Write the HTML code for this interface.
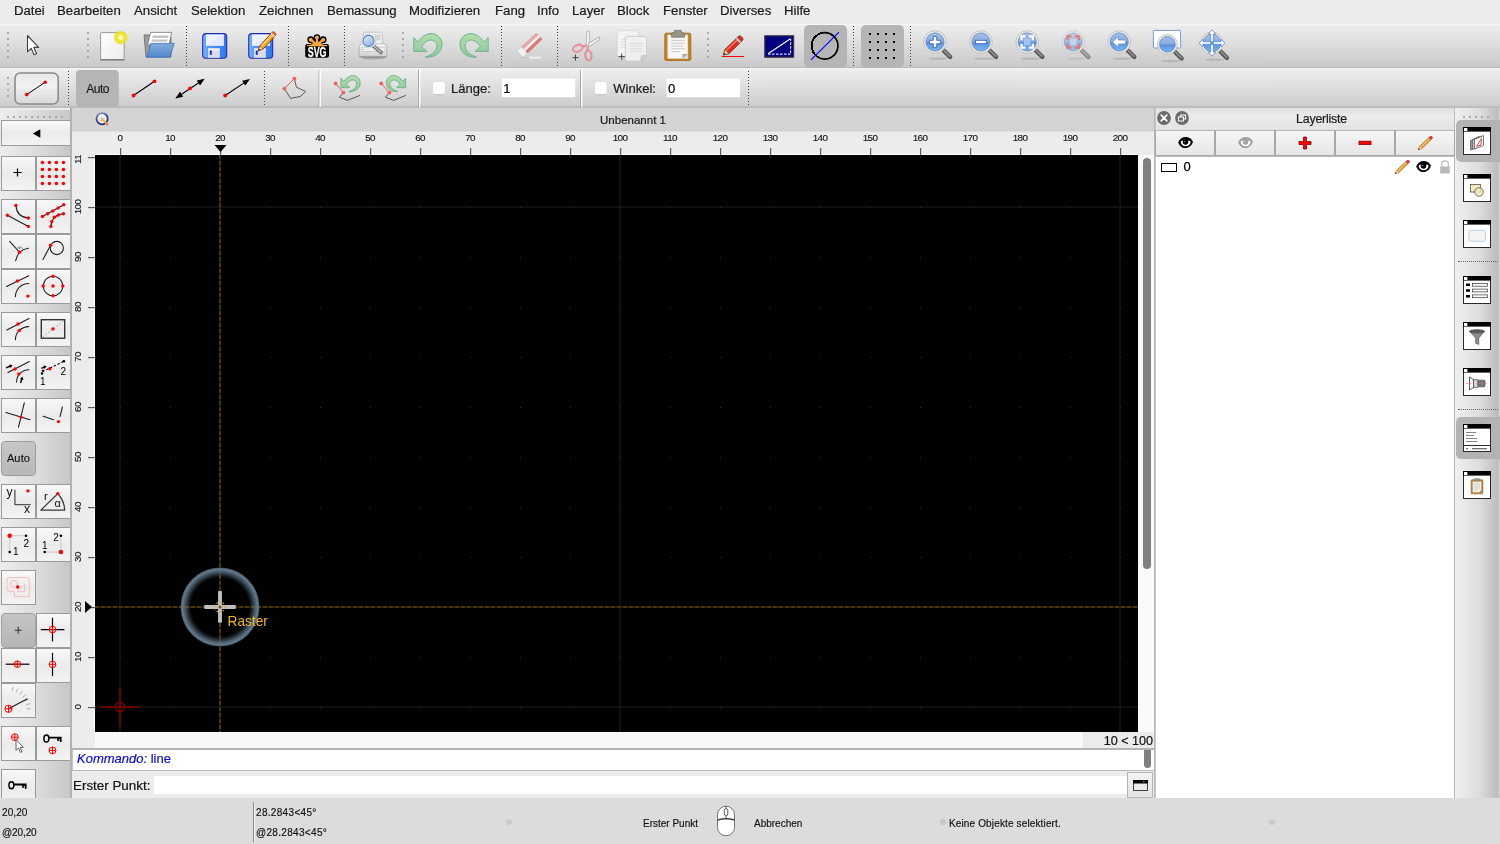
<!DOCTYPE html>
<html><head><meta charset="utf-8">
<style>
*{box-sizing:border-box;margin:0;padding:0}
html,body{width:1500px;height:844px;overflow:hidden;background:#ececec;font-family:"Liberation Sans",sans-serif;color:#1a1a1a}
.abs{position:absolute}
#menubar{position:absolute;left:0;top:0;width:1500px;height:25px;background:#ececec;border-bottom:1px solid #f6f6f6}
#menubar span{-webkit-text-stroke:.22px #1c1c1c;position:absolute;top:3px;font-size:13.2px;line-height:16px;white-space:nowrap;color:#1c1c1c}
#tb1{position:absolute;left:0;top:25px;width:1500px;height:43px;background:linear-gradient(#eeeeee,#dadada 55%,#c9c9c9);border-bottom:1px solid #b9b9b9}
#tb2{position:absolute;left:0;top:68px;width:1500px;height:40px;background:linear-gradient(#efefef,#dcdcdc 55%,#cdcdcd);border-top:1px solid #f4f4f4;border-bottom:2px solid #bdbdbd}
.vsep{position:absolute;width:0;border-left:1px dotted #555}
.hdl{position:absolute;width:2px;background-image:linear-gradient(#a8a8a8 2px,transparent 2px);background-size:2px 6px}
#left{position:absolute;left:0;top:110px;width:72px;height:688px;background:linear-gradient(90deg,#ededed,#dadada 55%,#c6c6c6)}
.tbtn{position:absolute;width:35px;height:35px;background:linear-gradient(#f8f8f8,#ebebeb 50%,#f3f3f3);border:1px solid #9a9a9a}
#status{position:absolute;left:0;top:798px;width:1500px;height:46px;background:#dcdcdc}
#status span{-webkit-text-stroke:.15px #111;position:absolute;font-size:10px;line-height:12px;white-space:nowrap;color:#111;letter-spacing:0;margin-top:1px}
#status i{position:absolute;width:6px;height:6px;border-radius:3px;background:#cacaca}
#tabbar{position:absolute;left:72px;top:108px;width:1083px;height:23px;background:#d3d3d3}
#hruler{position:absolute;left:73px;top:131px;width:1082px;height:24px;background:#ececec}
#vruler{position:absolute;left:73px;top:155px;width:22px;height:590px;background:#ececec}
#canvas{position:absolute;left:95px;top:155px;width:1043px;height:577px;background:#000;overflow:hidden}
#rpanel{position:absolute;left:1155px;top:108px;width:299px;height:690px;background:#fff}
#rtool{position:absolute;left:1454px;top:108px;width:46px;border-left:1px solid #bdbdbd;height:690px;background:linear-gradient(90deg,#efefef,#dddddd 55%,#bcbcbc 95%,#d4d4d4)}

#hstrip{position:absolute;left:95px;top:732px;width:1059px;height:16px;background:#f8f8f8}
#zoomlbl{position:absolute;left:1083px;top:732px;width:71px;height:16px;background:#ebebeb;font-size:12.6px;line-height:17.5px;text-align:right;padding-right:1px;padding-top:.7px;-webkit-text-stroke:.2px #111;color:#111;white-space:nowrap}
#vscroll{position:absolute;left:1138px;top:155px;width:16px;height:577px;background:#fafafa}
#vthumb{position:absolute;left:1143px;top:158px;width:8px;height:411px;border-radius:4px;background:#808080}
#cmd{position:absolute;left:72px;top:748px;width:1082px;height:23px;background:#fff;border-top:2px solid #b4b4b4;border-bottom:1px solid #b8b8b8;border-left:1px solid #c4c4c4}
#cmd span{position:absolute;left:4px;top:1px;font-size:13px;line-height:16px;color:#0c0cdc;-webkit-text-stroke:.2px #0c0cdc;white-space:nowrap}
#cthumb{position:absolute;left:1144px;top:750px;width:7px;height:18px;border-radius:0 0 3.5px 3.5px !important;border-radius:3.5px;background:#808080}
#prompt{position:absolute;left:72px;top:771px;width:1082px;height:27px;background:#ececec}
#prompt .lbl{-webkit-text-stroke:.2px #111;position:absolute;left:1px;top:5.7px;font-size:13.4px;line-height:18px;color:#111;white-space:nowrap}
#prompt .inp{position:absolute;left:82px;top:5px;width:973px;height:18px;background:#fff}
#prompt .btn{position:absolute;left:1055px;top:1px;width:26px;height:26px;background:linear-gradient(#f2f2f2,#e4e4e4);border:1px solid #b4b4b4}
#cborder{position:absolute;left:1154px;top:108px;width:2px;height:690px;background:linear-gradient(90deg,#b0b0b0,#cfcfcf)}
#lborder{position:absolute;left:70px;top:108px;width:2px;height:690px;background:#b2b2b2}
#rtitle{position:absolute;left:1156px;top:108px;width:298px;height:22px;background:linear-gradient(#dedede,#ececec 40%,#e2e2e2);font-size:12.4px;letter-spacing:-.22px;line-height:23px;text-align:center;color:#1c1c1c;padding-left:33px;-webkit-text-stroke:.2px #1c1c1c}
.lbtn{position:absolute;top:130px;width:60px;height:26px;background:linear-gradient(#f6f6f6,#e6e6e6);border:1px solid #a8a8a8;border-top-color:#b8b8b8}
</style></head><body><div id="root" style="position:absolute;left:0;top:0;width:1500px;height:844px;will-change:transform;opacity:.999">
<div id="menubar">
<span style="left:14px">Datei</span><span style="left:57px">Bearbeiten</span><span style="left:134px">Ansicht</span><span style="left:191px">Selektion</span><span style="left:259px">Zeichnen</span><span style="left:327px">Bemassung</span><span style="left:409px">Modifizieren</span><span style="left:495px">Fang</span><span style="left:537px">Info</span><span style="left:572px">Layer</span><span style="left:617px">Block</span><span style="left:663px">Fenster</span><span style="left:720px">Diverses</span><span style="left:784px">Hilfe</span>
</div>
<div id="tb1"></div>
<div id="tb2"></div>
<!--TB-->
<svg class="abs" style="left:0;top:24px" width="1500" height="44" viewBox="0 24 1500 44"><defs><linearGradient id="gBlue" x1="0" y1="0" x2="0" y2="1"><stop offset="0" stop-color="#a6c0e8"/><stop offset="0.49" stop-color="#85a9e0"/><stop offset="0.52" stop-color="#5c92dc"/><stop offset="1" stop-color="#7cb6f4"/></linearGradient><linearGradient id="gFl" x1="0" y1="0" x2="1" y2="0"><stop offset="0" stop-color="#7ab4ff"/><stop offset="0.3" stop-color="#4f97fb"/><stop offset="1" stop-color="#2a78f4"/></linearGradient><radialGradient id="gY"><stop offset="0" stop-color="#ffffff"/><stop offset="0.16" stop-color="#fdfbc0"/><stop offset="0.4" stop-color="#f1ea3a"/><stop offset="0.72" stop-color="#e8e020" stop-opacity="0.95"/><stop offset="1" stop-color="#e8e020" stop-opacity="0"/></radialGradient><linearGradient id="gPage" x1="0" y1="0" x2="1" y2="1"><stop offset="0" stop-color="#ffffff"/><stop offset="1" stop-color="#ececec"/></linearGradient><linearGradient id="gFold" x1="0" y1="0" x2="0" y2="1"><stop offset="0" stop-color="#84acdc"/><stop offset="1" stop-color="#4f87cc"/></linearGradient><linearGradient id="gGreen" x1="0" y1="0" x2="0" y2="1"><stop offset="0" stop-color="#b4dca8"/><stop offset="1" stop-color="#8cc8a0"/></linearGradient><linearGradient id="gPr" x1="0" y1="0" x2="0" y2="1"><stop offset="0" stop-color="#fbfbfb"/><stop offset="0.55" stop-color="#e6e6e6"/><stop offset="1" stop-color="#c6c6c6"/></linearGradient><linearGradient id="gBtn" x1="0" y1="0" x2="0" y2="1"><stop offset="0" stop-color="#e8e8e8"/><stop offset="0.48" stop-color="#f3f3f3"/><stop offset="0.52" stop-color="#ebebeb"/><stop offset="1" stop-color="#d9d9d9"/></linearGradient><linearGradient id="gLens" x1="0" y1="0" x2="0.5" y2="1"><stop offset="0" stop-color="#e4ecf8"/><stop offset="0.5" stop-color="#c0d2ea"/><stop offset="1" stop-color="#9db8dc"/></linearGradient></defs><rect x="7" y="32" width="2" height="2" fill="#a9a9a9"/><rect x="7" y="38" width="2" height="2" fill="#a9a9a9"/><rect x="7" y="44" width="2" height="2" fill="#a9a9a9"/><rect x="7" y="50" width="2" height="2" fill="#a9a9a9"/><rect x="7" y="56" width="2" height="2" fill="#a9a9a9"/><rect x="87" y="32" width="2" height="2" fill="#a9a9a9"/><rect x="87" y="38" width="2" height="2" fill="#a9a9a9"/><rect x="87" y="44" width="2" height="2" fill="#a9a9a9"/><rect x="87" y="50" width="2" height="2" fill="#a9a9a9"/><rect x="87" y="56" width="2" height="2" fill="#a9a9a9"/><rect x="402" y="32" width="2" height="2" fill="#a9a9a9"/><rect x="402" y="38" width="2" height="2" fill="#a9a9a9"/><rect x="402" y="44" width="2" height="2" fill="#a9a9a9"/><rect x="402" y="50" width="2" height="2" fill="#a9a9a9"/><rect x="402" y="56" width="2" height="2" fill="#a9a9a9"/><rect x="707" y="32" width="2" height="2" fill="#a9a9a9"/><rect x="707" y="38" width="2" height="2" fill="#a9a9a9"/><rect x="707" y="44" width="2" height="2" fill="#a9a9a9"/><rect x="707" y="50" width="2" height="2" fill="#a9a9a9"/><rect x="707" y="56" width="2" height="2" fill="#a9a9a9"/>
<line x1="186.5" y1="26" x2="186.5" y2="66" stroke="#444" stroke-width="1" stroke-dasharray="1 2"/>
<line x1="288.5" y1="26" x2="288.5" y2="66" stroke="#444" stroke-width="1" stroke-dasharray="1 2"/>
<line x1="344.5" y1="26" x2="344.5" y2="66" stroke="#444" stroke-width="1" stroke-dasharray="1 2"/>
<line x1="501.5" y1="26" x2="501.5" y2="66" stroke="#444" stroke-width="1" stroke-dasharray="1 2"/>
<line x1="557.5" y1="26" x2="557.5" y2="66" stroke="#444" stroke-width="1" stroke-dasharray="1 2"/>
<line x1="853.5" y1="26" x2="853.5" y2="66" stroke="#444" stroke-width="1" stroke-dasharray="1 2"/>
<line x1="910.5" y1="26" x2="910.5" y2="66" stroke="#444" stroke-width="1" stroke-dasharray="1 2"/>
<path d="M27.5 35.5 V51.8 L31.2 48.4 L34 54.8 L36.6 53.6 L33.8 47.4 H38.6Z" fill="#fff" stroke="#444" stroke-width="1.1" stroke-linejoin="round"/>
<rect x="100.6" y="32.6" width="23.6" height="27" rx="1.2" fill="url(#gPage)" stroke="#9a9a9a" stroke-width="1"/><path d="M100.2 59.8 H124.6" stroke="#787878" stroke-width="1.4"/><circle cx="120.7" cy="37.6" r="7.6" fill="url(#gY)"/><path d="M102.4 42.2 h1 M102.4 49.4 h1" stroke="#ccc" stroke-width="0.8"/>
<path d="M144 35 H152 L153 37 H171 V57 H146Z" fill="#9c9c9c" stroke="#6a6a6a" stroke-width="0.8"/><path d="M150.6 32.4 H171.6 L169 45 H147.6Z" fill="#fff" stroke="#777" stroke-width="0.8"/><path d="M152.8 35.6 H168.6 L168 38 H152.4Z M152 39.4 H167.6 L167 41.8 H151.4Z" fill="#c4c4c4"/><path d="M150.6 43.4 H174.2 L169.8 57.2 H146.2 Q149.6 51 150.6 43.4Z" fill="url(#gFold)" stroke="#3f74bb" stroke-width="0.8" stroke-linejoin="round"/>
<rect x="202.7" y="33.6" width="24" height="24.6" rx="3.2" fill="url(#gFl)" stroke="#2a2aa6" stroke-width="1.1"/><rect x="206" y="34.4" width="17.8" height="11.4" fill="#eef1ff"/><path d="M206 45.8 L223.8 34.4 V45.8Z" fill="#dfe6ff" opacity="0.7"/><rect x="208" y="48.4" width="11.8" height="9.4" fill="#dcdce6"/><rect x="208" y="48.4" width="11.8" height="2" fill="#f0f0f6"/><rect x="209.8" y="50.6" width="2" height="4.2" fill="#1430d0"/>
<rect x="248.7" y="33.6" width="24" height="24.6" rx="3.2" fill="url(#gFl)" stroke="#2a2aa6" stroke-width="1.1"/><rect x="252" y="34.4" width="17.8" height="11.4" fill="#eef1ff"/><path d="M252 45.8 L269.8 34.4 V45.8Z" fill="#dfe6ff" opacity="0.7"/><rect x="254" y="48.4" width="11.8" height="9.4" fill="#dcdce6"/><rect x="254" y="48.4" width="11.8" height="2" fill="#f0f0f6"/><rect x="255.8" y="50.6" width="2" height="4.2" fill="#1430d0"/><g transform="translate(258.4,50.8) rotate(-47.6)"><path d="M0 0 L4.6 -2.3 H23 Q24.4 -2.3 24.4 -1 V1 Q24.4 2.3 23 2.3 H4.6Z" fill="#f8a818" stroke="#a03010" stroke-width="0.9" stroke-linejoin="round"/><path d="M4.6 -0.9 H21" stroke="#ffe27a" stroke-width="1.3"/><path d="M0 0 L4.6 -2.3 V2.3Z" fill="#f4dcb4" stroke="#a03010" stroke-width="0.6"/><path d="M0 0 L1.8 -0.9 V0.9Z" fill="#222"/><rect x="20.6" y="-2.3" width="1.8" height="4.6" fill="#d8d8d8"/><path d="M22.4 -2.3 H23 Q24.4 -2.3 24.4 -1 V1 Q24.4 2.3 23 2.3 H22.4Z" fill="#e06030"/></g>
<path d="M307.4 44 H326.8 Q329 44 329 46.2 V55.4 Q329 57.8 326.6 57.8 H307.6 Q305.2 57.8 305.2 55.4 V46.2 Q305.2 44 307.4 44Z" fill="#000"/><path d="M316.95 44.8 L310.7 39.7" stroke="#000" stroke-width="5" stroke-linecap="round"/><circle cx="310.7" cy="39.7" r="3.35" fill="#000"/><path d="M316.95 44.8 L316.95 37.5" stroke="#000" stroke-width="5" stroke-linecap="round"/><circle cx="316.95" cy="37.5" r="3.35" fill="#000"/><path d="M316.95 44.8 L323.2 39.7" stroke="#000" stroke-width="5" stroke-linecap="round"/><circle cx="323.2" cy="39.7" r="3.35" fill="#000"/><path d="M306.9 45.9 Q311.6 45 314.2 42.6 H319.7 Q322.3 45 327.3 45.9 Q317 46.6 306.9 45.9Z" fill="#f9a936"/><path d="M316.95 44.8 L310.7 39.7" stroke="#f9a936" stroke-width="2.3" stroke-linecap="round"/><circle cx="310.7" cy="39.7" r="1.95" fill="#f9a936"/><path d="M316.95 44.8 L316.95 37.5" stroke="#f9a936" stroke-width="2.3" stroke-linecap="round"/><circle cx="316.95" cy="37.5" r="1.95" fill="#f9a936"/><path d="M316.95 44.8 L323.2 39.7" stroke="#f9a936" stroke-width="2.3" stroke-linecap="round"/><circle cx="323.2" cy="39.7" r="1.95" fill="#f9a936"/><rect x="307" y="45" width="20.2" height="1.1" fill="#f9a936"/><text x="317.1" y="57.1" text-anchor="middle" font-family="Liberation Sans, sans-serif" font-size="14.4" font-weight="bold" fill="#fff" stroke="#fff" stroke-width="0.3" textLength="18.8" lengthAdjust="spacingAndGlyphs">SVG</text>
<rect x="363.4" y="32.2" width="19" height="14" rx="1" fill="#f2f2f2" stroke="#bdbdbd" stroke-width="0.8"/><rect x="374.6" y="34.4" width="6" height="6" fill="#d6d6d6"/><path d="M362.2 43.8 H383.8 Q385.4 43.8 386 45 L386.8 47.4 V55.4 Q386.8 57.4 384.8 57.4 H361.2 Q359.2 57.4 359.2 55.4 V47.4 L360 45 Q360.6 43.8 362.2 43.8Z" fill="url(#gPr)" stroke="#a8a8a8" stroke-width="0.8"/><path d="M359.6 56.9 H386.4" stroke="#8e8e8e" stroke-width="1.1"/><path d="M361.2 47.2 H384.8 V51.6 H361.2Z" fill="#f0f0f0" stroke="#b4b4b4" stroke-width="0.6"/><circle cx="363.4" cy="49.4" r="0.5" fill="#777"/><ellipse cx="373" cy="58.4" rx="11" ry="1.1" fill="#000" opacity="0.16"/><path d="M373.4 45.8 L381 52.4" stroke="#5e5e5e" stroke-width="3.6" stroke-linecap="round"/><path d="M373.6 45.8 L380.9 52.2" stroke="#b4b4b0" stroke-width="2" stroke-linecap="round"/><circle cx="368.5" cy="40.9" r="7.2" fill="#f5f5f1" stroke="#bcbcb4" stroke-width="0.5"/><circle cx="368.5" cy="40.9" r="5.5" fill="url(#gLens)" stroke="#4a84cc" stroke-width="1.1"/>
<path transform="translate(430.6,45.4) scale(1.0,1.0)" d="M-16.8 -7.9 L-12.9 -3.3 C-9 -8 -5 -11.6 0.4 -11.8 C6.5 -11.9 11.2 -7.5 11.4 -1.3 C11.6 4.5 8 8.5 3.6 10.4 C1 11.5 -2 12 -4.7 12 Q-5.4 11.7 -4.7 11.3 C0 10.4 4.6 7 6 2.7 C7.2 -1.5 4.5 -5.3 0 -5.3 C-3.5 -5.2 -6.5 -2.2 -9.1 1.1 L-3.7 6 H-16.8Z" fill="url(#gGreen)" stroke="#6eb48c" stroke-width="1.00" stroke-linejoin="round" opacity="1"/>
<path transform="translate(471.4,45.4) scale(-1.0,1.0)" d="M-16.8 -7.9 L-12.9 -3.3 C-9 -8 -5 -11.6 0.4 -11.8 C6.5 -11.9 11.2 -7.5 11.4 -1.3 C11.6 4.5 8 8.5 3.6 10.4 C1 11.5 -2 12 -4.7 12 Q-5.4 11.7 -4.7 11.3 C0 10.4 4.6 7 6 2.7 C7.2 -1.5 4.5 -5.3 0 -5.3 C-3.5 -5.2 -6.5 -2.2 -9.1 1.1 L-3.7 6 H-16.8Z" fill="url(#gGreen)" stroke="#6eb48c" stroke-width="1.00" stroke-linejoin="round" opacity="1"/>
<g opacity="0.88"><ellipse cx="531" cy="57.6" rx="11" ry="1.1" fill="#fff" opacity="0.75"/><ellipse cx="525" cy="57.7" rx="4.6" ry="0.9" fill="#888" opacity="0.5"/><g transform="translate(517,51.2) rotate(-43.5)"><rect x="0" y="0" width="6.4" height="8.8" fill="#f6f6f6" stroke="#b8b8b8" stroke-width="0.5"/><rect x="6.4" y="0" width="20.4" height="8.8" rx="1" fill="#e07878"/><rect x="6.4" y="0" width="20.4" height="3" rx="0.8" fill="#eba2a2"/><rect x="6.4" y="3" width="20.4" height="2.8" fill="#f6f6f6"/><rect x="6.4" y="5.8" width="20.4" height="3" rx="0.6" fill="#d96c6c"/></g></g>
<g><path d="M586 46 L587 31.4 L589.6 31 L589.2 46Z" fill="#f4f4f4" stroke="#aaa" stroke-width="0.7"/><path d="M588.4 43.4 L599.4 37 L599.8 39.6 L589.2 46.4Z" fill="#f4f4f4" stroke="#999" stroke-width="0.7"/><ellipse cx="577.8" cy="48.2" rx="5" ry="3.2" transform="rotate(-22 577.8 48.2)" fill="none" stroke="#e8929a" stroke-width="2.2"/><ellipse cx="588.4" cy="55.4" rx="3.1" ry="4.9" transform="rotate(-8 588.4 55.4)" fill="none" stroke="#e8929a" stroke-width="2.2"/><path d="M582.6 46.6 L587.4 45.4 M587.6 47 L587.6 50.6" stroke="#e8929a" stroke-width="2.4"/><path d="M572.4 57.6 H578.6 M575.5 54.5 V60.7" stroke="#444" stroke-width="1"/></g>
<g><rect x="617.4" y="30.6" width="21.2" height="25.6" rx="1.4" fill="#f4f4f4" stroke="#d4d4d4" stroke-width="0.8"/><path d="M621 39.4 H628 M621 42 H628 M621 44.6 H628 M621 47.2 H628" stroke="#dcdcdc" stroke-width="0.9"/><path d="M626.8 36.4 H645.4 Q646.6 36.4 646.6 37.6 V55.6 L641 61.2 H626.8 Q625.4 61.2 625.4 60 V37.6 Q625.4 36.4 626.8 36.4Z" fill="#f0f0f0" stroke="#c4c4c4" stroke-width="0.8"/><path d="M641 61.2 V57 Q641 55.6 642.4 55.6 H646.6Z" fill="#d0d0d0" stroke="#b8b8b8" stroke-width="0.6"/><path d="M629.6 43.4 H643.4 M629.6 46 H643.4 M629.6 48.6 H641.4 M629.6 51.2 H643.4" stroke="#d8d8d8" stroke-width="0.9"/><path d="M618.6 56.6 H624.8 M621.7 53.5 V59.7" stroke="#444" stroke-width="1"/></g>
<g><rect x="664.8" y="33.2" width="26" height="27.2" rx="1.4" fill="#c8841c" stroke="#a0640c" stroke-width="0.8"/><rect x="667.8" y="35" width="20" height="23.4" fill="#f7f7f7" stroke="#ddd" stroke-width="0.5"/><path d="M671.4 40.4 H685 M671.4 43.2 H684.4 M671.4 46 H683 M671.4 48.8 H685 M671.4 51.6 H680" stroke="#c4c4c4" stroke-width="0.9"/><path d="M682.4 58.4 V54 H687.8 V58.4Z" fill="#aaa"/><path d="M682.4 58.4 L687.8 54 V58.4Z" fill="#ddd"/><path d="M671.4 37.2 V34 Q671.4 32.6 673 32.6 H674.4 V30.4 H681.4 V32.6 H683 Q684.6 32.6 684.6 34 V37.2Z" fill="#969688" stroke="#707064" stroke-width="0.7"/></g>
<g><path d="M722 56.5 H744" stroke="#ff0000" stroke-width="1"/><g transform="translate(723.4,55) rotate(-44.2)"><path d="M0 0 L5 -2.9 H23.6 Q25.6 -2.9 25.6 -1 V1 Q25.6 2.9 23.6 2.9 H5Z" fill="#e02820" stroke="#7a4a1a" stroke-width="0.9" stroke-linejoin="round"/><path d="M5 -1.2 H20" stroke="#ff7a6a" stroke-width="1.3"/><path d="M0 0 L5 -2.9 V2.9Z" fill="#f0cfa0" stroke="#7a4a1a" stroke-width="0.6"/><path d="M0 0 L2 -1.15 V1.15Z" fill="#222"/><rect x="19.8" y="-2.9" width="2.2" height="5.8" fill="#c4c4c4"/></g></g>
<rect x="764.8" y="35.8" width="28.8" height="21.4" fill="#000080" stroke="#3a3a3a" stroke-width="1.2"/><path d="M768 53.8 L790.4 38.8" stroke="#fff" stroke-width="1.1"/><path d="M768 54.2 H790.6 V38.8" stroke="#dcdcf4" stroke-width="1.2" fill="none" stroke-dasharray="2.6 1.4"/>
<rect x="804" y="25" width="43" height="42.6" rx="5" fill="#b5b5b5"/><path d="M822 32.9 A13.2 13.2 0 1 1 819 57.7" fill="none" stroke="#000" stroke-width="1.7"/><path d="M822.5 32.8 A13.2 13.2 0 0 0 819.5 57.9" fill="none" stroke="#000" stroke-width="1.9" shape-rendering="crispEdges"/><path d="M811 59.8 L839 32.2" stroke="#0000ff" stroke-width="1.1"/>
<rect x="861" y="25" width="43" height="42.6" rx="5" fill="#b5b5b5"/><rect x="869" y="33" width="2" height="2" fill="#000"/><rect x="869" y="41" width="2" height="2" fill="#000"/><rect x="869" y="49" width="2" height="2" fill="#000"/><rect x="869" y="57" width="2" height="2" fill="#000"/><rect x="877" y="33" width="2" height="2" fill="#000"/><rect x="877" y="41" width="2" height="2" fill="#000"/><rect x="877" y="49" width="2" height="2" fill="#000"/><rect x="877" y="57" width="2" height="2" fill="#000"/><rect x="885" y="33" width="2" height="2" fill="#000"/><rect x="885" y="41" width="2" height="2" fill="#000"/><rect x="885" y="49" width="2" height="2" fill="#000"/><rect x="885" y="57" width="2" height="2" fill="#000"/><rect x="893" y="33" width="2" height="2" fill="#000"/><rect x="893" y="41" width="2" height="2" fill="#000"/><rect x="893" y="49" width="2" height="2" fill="#000"/><rect x="893" y="57" width="2" height="2" fill="#000"/>
<g opacity="1.0"><ellipse cx="938" cy="58.6" rx="10" ry="1.2" fill="#000" opacity="0.12"/><path d="M943.7 50.7 L950.1 56.9" stroke="#555" stroke-width="4.4" stroke-linecap="round"/><path d="M944.1 50.7 L949.9 56.3" stroke="#8a8a84" stroke-width="2" stroke-linecap="round"/><circle cx="935" cy="42" r="11.3" fill="#ecece6" stroke="#b0b0a8" stroke-width="0.7"/><circle cx="935" cy="42" r="9.1" fill="url(#gBlue)" stroke="#5c86c8" stroke-width="0.8"/><path d="M933.3 36.4 h3.4 v3.9 h3.9 v3.4 h-3.9 v3.9 h-3.4 v-3.9 h-3.9 v-3.4 h3.9z" fill="#fff" stroke="#3a6ab8" stroke-width="0.9"/></g>
<g opacity="1.0"><ellipse cx="984" cy="58.6" rx="10" ry="1.2" fill="#000" opacity="0.12"/><path d="M989.7 50.7 L996.1 56.9" stroke="#555" stroke-width="4.4" stroke-linecap="round"/><path d="M990.1 50.7 L995.9 56.3" stroke="#8a8a84" stroke-width="2" stroke-linecap="round"/><circle cx="981" cy="42" r="11.3" fill="#ecece6" stroke="#b0b0a8" stroke-width="0.7"/><circle cx="981" cy="42" r="9.1" fill="url(#gBlue)" stroke="#5c86c8" stroke-width="0.8"/><rect x="975.4" y="40.3" width="11.2" height="3.4" fill="#fff" stroke="#3a6ab8" stroke-width="0.9"/></g>
<g opacity="1.0"><ellipse cx="1030.2" cy="58.6" rx="10" ry="1.2" fill="#000" opacity="0.12"/><path d="M1035.9 50.7 L1042.3 56.9" stroke="#555" stroke-width="4.4" stroke-linecap="round"/><path d="M1036.3 50.7 L1042.1 56.3" stroke="#8a8a84" stroke-width="2" stroke-linecap="round"/><circle cx="1027.2" cy="42" r="11.3" fill="#ecece6" stroke="#b0b0a8" stroke-width="0.7"/><circle cx="1027.2" cy="42" r="9.1" fill="url(#gBlue)" stroke="#5c86c8" stroke-width="0.8"/><rect x="1024.0" y="38.8" width="6.4" height="6.4" fill="#a8c4ec"/><path d="M1021.5 40.3 V36.3 H1025.5 M1021.5 43.7 V47.7 H1025.5 M1032.9 40.3 V36.3 H1028.9 M1032.9 43.7 V47.7 H1028.9 " stroke="#fff" stroke-width="2.2" fill="none"/></g>
<g opacity="0.62"><ellipse cx="1076.2" cy="58.6" rx="10" ry="1.2" fill="#000" opacity="0.12"/><path d="M1081.9 50.7 L1088.3 56.9" stroke="#555" stroke-width="4.4" stroke-linecap="round"/><path d="M1082.3 50.7 L1088.1 56.3" stroke="#8a8a84" stroke-width="2" stroke-linecap="round"/><circle cx="1073.2" cy="42" r="11.3" fill="#ecece6" stroke="#b0b0a8" stroke-width="0.7"/><circle cx="1073.2" cy="42" r="9.1" fill="url(#gBlue)" stroke="#5c86c8" stroke-width="0.8"/><rect x="1070.0" y="38.8" width="6.4" height="6.4" fill="#b4ccec"/><path d="M1067.5 40.3 V36.3 H1071.5 M1067.5 43.7 V47.7 H1071.5 M1078.9 40.3 V36.3 H1074.9 M1078.9 43.7 V47.7 H1074.9 " stroke="#f03838" stroke-width="2.2" fill="none"/></g>
<g opacity="1.0"><ellipse cx="1122.2" cy="58.6" rx="10" ry="1.2" fill="#000" opacity="0.12"/><path d="M1127.9 50.7 L1134.3 56.9" stroke="#555" stroke-width="4.4" stroke-linecap="round"/><path d="M1128.3 50.7 L1134.1 56.3" stroke="#8a8a84" stroke-width="2" stroke-linecap="round"/><circle cx="1119.2" cy="42" r="11.3" fill="#ecece6" stroke="#b0b0a8" stroke-width="0.7"/><circle cx="1119.2" cy="42" r="9.1" fill="url(#gBlue)" stroke="#5c86c8" stroke-width="0.8"/><path d="M1112.4 42 L1118.4 36.6 V40 H1125.6 V44 H1118.4 V47.4Z" fill="#fff" stroke="#4a78c0" stroke-width="0.6" stroke-linejoin="round"/></g>
<rect x="1153.4" y="30.4" width="27.2" height="17.6" rx="1" fill="#fff" stroke="#6a90d8" stroke-width="0.9"/><g opacity="1.0"><ellipse cx="1170.4" cy="61.0" rx="10" ry="1.2" fill="#000" opacity="0.12"/><path d="M1175.2 52.2 L1181.6 58.4" stroke="#555" stroke-width="4.4" stroke-linecap="round"/><path d="M1175.6 52.2 L1181.4 57.8" stroke="#8a8a84" stroke-width="2" stroke-linecap="round"/><circle cx="1167.4" cy="44.4" r="10.0" fill="#ecece6" stroke="#b0b0a8" stroke-width="0.7"/><circle cx="1167.4" cy="44.4" r="7.8" fill="url(#gBlue)" stroke="#5c86c8" stroke-width="0.8"/><path d="M1159.6 45.4 Q1167.4 48 1175.2 45.4" stroke="#4a80d0" stroke-width="0.8" fill="none" opacity="0.6"/></g>
<g opacity="1.0"><ellipse cx="1215" cy="59.6" rx="10" ry="1.2" fill="#000" opacity="0.12"/><path d="M1220.6 51.6 L1227.0 57.8" stroke="#555" stroke-width="4.4" stroke-linecap="round"/><path d="M1221.0 51.6 L1226.8 57.2" stroke="#8a8a84" stroke-width="2" stroke-linecap="round"/><circle cx="1212" cy="43" r="11.100000000000001" fill="#ecece6" stroke="#b0b0a8" stroke-width="0.7"/><circle cx="1212" cy="43" r="8.9" fill="url(#gBlue)" stroke="#5c86c8" stroke-width="0.8"/><path transform="translate(1212,43) rotate(0)" d="M-1.3 -1.3 V-9 H-3.6 L0 -13.2 L3.6 -9 H1.3 V-1.3Z" fill="#fff" stroke="#4a80d0" stroke-width="0.7" stroke-linejoin="round"/><path transform="translate(1212,43) rotate(90)" d="M-1.3 -1.3 V-9 H-3.6 L0 -13.2 L3.6 -9 H1.3 V-1.3Z" fill="#fff" stroke="#4a80d0" stroke-width="0.7" stroke-linejoin="round"/><path transform="translate(1212,43) rotate(180)" d="M-1.3 -1.3 V-9 H-3.6 L0 -13.2 L3.6 -9 H1.3 V-1.3Z" fill="#fff" stroke="#4a80d0" stroke-width="0.7" stroke-linejoin="round"/><path transform="translate(1212,43) rotate(270)" d="M-1.3 -1.3 V-9 H-3.6 L0 -13.2 L3.6 -9 H1.3 V-1.3Z" fill="#fff" stroke="#4a80d0" stroke-width="0.7" stroke-linejoin="round"/></g></svg>
<svg class="abs" style="left:0;top:68px" width="1500" height="40" viewBox="0 68 1500 40"><rect x="7" y="77" width="2" height="2" fill="#a9a9a9"/><rect x="7" y="83" width="2" height="2" fill="#a9a9a9"/><rect x="7" y="89" width="2" height="2" fill="#a9a9a9"/><rect x="7" y="95" width="2" height="2" fill="#a9a9a9"/>
<rect x="15" y="73" width="43.2" height="31" rx="5.2" fill="url(#gBtn)" stroke="#8b8b8b" stroke-width="1.6"/><path d="M26.7 94.6 L45.2 82.2" stroke="#000" stroke-width="1"/><circle cx="26.7" cy="94.6" r="1.8" fill="#f00"/><circle cx="45.2" cy="82.2" r="1.8" fill="#f00"/>
<line x1="68.5" y1="71" x2="68.5" y2="105" stroke="#444" stroke-width="1" stroke-dasharray="1 2"/><line x1="264.5" y1="71" x2="264.5" y2="105" stroke="#444" stroke-width="1" stroke-dasharray="1 2"/><line x1="748.5" y1="71" x2="748.5" y2="105" stroke="#444" stroke-width="1" stroke-dasharray="1 2"/>
<rect x="76" y="70" width="42.8" height="37" rx="4" fill="#b5b5b5"/><text x="97.6" y="92.8" text-anchor="middle" font-family="Liberation Sans, sans-serif" font-size="12" letter-spacing="-0.5" fill="#1a1a1a" stroke="#1a1a1a" stroke-width="0.15">Auto</text>
<path d="M133.5 95.5 L154.5 81.3" stroke="#000" stroke-width="1.1"/><circle cx="133.5" cy="95.5" r="1.9" fill="#f00"/><circle cx="154.5" cy="81.3" r="1.9" fill="#f00"/>
<path d="M177.5 97 L202.5 80.2" stroke="#000" stroke-width="1.1"/><path d="M204.7 78.7 L200.0 85.4 L196.8 80.5Z" fill="#000"/><path d="M175.3 98.5 L180.0 91.8 L183.2 96.7Z" fill="#000"/><circle cx="190" cy="88.4" r="1.9" fill="#f00"/>
<path d="M225.2 95.5 L247.5 80.6" stroke="#000" stroke-width="1.1"/><path d="M250.0 79.0 L245.3 85.6 L242.1 80.8Z" fill="#000"/><circle cx="225.2" cy="95.5" r="1.9" fill="#f00"/>
<path d="M294.4 78.6 L296.4 87.2 L305.6 91.4 L300.6 96.4 L290.6 98.4 L284.4 88.6" stroke="#4a4a4a" stroke-width="0.9" fill="none" stroke-linejoin="round"/><path d="M294.4 78.6 L284.4 88.6" stroke="#f05858" stroke-width="1"/><circle cx="294.4" cy="78.6" r="1.9" fill="#f06060"/><circle cx="284.4" cy="88.6" r="1.9" fill="#f06060"/>
<rect x="318.5" y="70" width="1" height="37" fill="#a8a8a8"/><rect x="319.5" y="70" width="1.4" height="37" fill="#ffffff"/><rect x="418" y="70" width="1" height="37" fill="#a8a8a8"/><rect x="419" y="70" width="1.4" height="37" fill="#ffffff"/><rect x="580" y="70" width="1" height="37" fill="#a8a8a8"/><rect x="581" y="70" width="1.4" height="37" fill="#ffffff"/>
<path d="M343.4 92.6 L339.4 97.2 L347.4 100.4 L360 95.4" stroke="#4a4a4a" stroke-width="0.9" fill="none"/><path transform="translate(352.4,83.6) scale(0.68,0.68)" d="M-16.8 -7.9 L-12.9 -3.3 C-9 -8 -5 -11.6 0.4 -11.8 C6.5 -11.9 11.2 -7.5 11.4 -1.3 C11.6 4.5 8 8.5 3.6 10.4 C1 11.5 -2 12 -4.7 12 Q-5.4 11.7 -4.7 11.3 C0 10.4 4.6 7 6 2.7 C7.2 -1.5 4.5 -5.3 0 -5.3 C-3.5 -5.2 -6.5 -2.2 -9.1 1.1 L-3.7 6 H-16.8Z" fill="url(#gGreen)" stroke="#6eb48c" stroke-width="1.47" stroke-linejoin="round" opacity="1"/><path d="M335.6 83.4 L343.4 92.6" stroke="#f05858" stroke-width="1"/><circle cx="335.6" cy="83.4" r="1.9" fill="#f06060"/><circle cx="343.4" cy="92.6" r="1.9" fill="#f06060"/>
<path d="M389.4 92.6 L385.4 97.2 L393.6 100.4 L405.8 95.4" stroke="#4a4a4a" stroke-width="0.9" fill="none"/><path transform="translate(394.2,83.6) scale(-0.68,0.68)" d="M-16.8 -7.9 L-12.9 -3.3 C-9 -8 -5 -11.6 0.4 -11.8 C6.5 -11.9 11.2 -7.5 11.4 -1.3 C11.6 4.5 8 8.5 3.6 10.4 C1 11.5 -2 12 -4.7 12 Q-5.4 11.7 -4.7 11.3 C0 10.4 4.6 7 6 2.7 C7.2 -1.5 4.5 -5.3 0 -5.3 C-3.5 -5.2 -6.5 -2.2 -9.1 1.1 L-3.7 6 H-16.8Z" fill="url(#gGreen)" stroke="#6eb48c" stroke-width="1.47" stroke-linejoin="round" opacity="1"/><path d="M381.2 83.4 L389.4 92.6" stroke="#f05858" stroke-width="1"/><circle cx="381.2" cy="83.4" r="1.9" fill="#f06060"/><circle cx="389.4" cy="92.6" r="1.9" fill="#f06060"/>
<rect x="432.5" y="81.6" width="12.8" height="12.8" rx="3" fill="#fff" stroke="#d0d0d0" stroke-width="0.6"/><path d="M434.0 94.8 H443.8" stroke="#bdbdbd" stroke-width="0.8"/><rect x="594.4" y="81.6" width="12.8" height="12.8" rx="3" fill="#fff" stroke="#d0d0d0" stroke-width="0.6"/><path d="M595.9 94.8 H605.6999999999999" stroke="#bdbdbd" stroke-width="0.8"/>
<text x="451" y="93.2" font-family="Liberation Sans, sans-serif" font-size="13" fill="#1a1a1a" stroke="#1a1a1a" stroke-width="0.2" textLength="39.8" lengthAdjust="spacingAndGlyphs">Länge:</text><text x="613.2" y="93.2" font-family="Liberation Sans, sans-serif" font-size="13" fill="#1a1a1a" stroke="#1a1a1a" stroke-width="0.2" textLength="42.8" lengthAdjust="spacingAndGlyphs">Winkel:</text>
<rect x="501.8" y="78.6" width="73.4" height="19.2" fill="#fff"/><rect x="501.8" y="97.4" width="73.4" height="0.8" fill="#c8c8c8"/><rect x="666.6" y="78.6" width="73.4" height="19.2" fill="#fff"/><rect x="666.6" y="97.4" width="73.4" height="0.8" fill="#c8c8c8"/><text x="503.2" y="93" font-family="Liberation Sans, sans-serif" font-size="13" fill="#000" stroke="#000" stroke-width="0.2">1</text><text x="668" y="93" font-family="Liberation Sans, sans-serif" font-size="13" fill="#000" stroke="#000" stroke-width="0.2">0</text></svg>
<!--/TB-->
<div id="left"></div>
<!--LT-->
<div class="hdl" style="left:7px;top:116px;width:58px;height:2px;background-image:linear-gradient(90deg,#a8a8a8 2px,transparent 2px);background-size:6px 2px"></div>
<div class="tbtn" style="left:1px;top:120px;width:70px;height:26px"><svg class="abs" style="left:29px;top:7px" width="11" height="11" viewBox="0 0 11 11"><path d="M9.3 1.3 V9.7 L1.8 5.5Z" fill="#000"/></svg></div>
<div class="tbtn" style="left:1px;top:156px"></div>
<div class="tbtn" style="left:36px;top:156px"></div>
<div class="tbtn" style="left:1px;top:199px"></div>
<div class="tbtn" style="left:36px;top:199px"></div>
<div class="tbtn" style="left:1px;top:234px"></div>
<div class="tbtn" style="left:36px;top:234px"></div>
<div class="tbtn" style="left:1px;top:269px"></div>
<div class="tbtn" style="left:36px;top:269px"></div>
<div class="tbtn" style="left:1px;top:312px"></div>
<div class="tbtn" style="left:36px;top:312px"></div>
<div class="tbtn" style="left:1px;top:355px"></div>
<div class="tbtn" style="left:36px;top:355px"></div>
<div class="tbtn" style="left:1px;top:398px"></div>
<div class="tbtn" style="left:36px;top:398px"></div>
<div class="abs" style="left:1px;top:441px;width:35px;height:35px;border:1px solid #9c9c9c;border-radius:4px;background:linear-gradient(#c6c6c6,#b8b8b8);font-size:11px;letter-spacing:.15px;line-height:33px;text-align:center;color:#111;-webkit-text-stroke:.15px #111">Auto</div>
<div class="tbtn" style="left:1px;top:484px"></div>
<div class="tbtn" style="left:36px;top:484px"></div>
<div class="tbtn" style="left:1px;top:527px"></div>
<div class="tbtn" style="left:36px;top:527px"></div>
<div class="tbtn" style="left:1px;top:570px"></div>
<div class="abs" style="left:1px;top:613px;width:35px;height:35px;border:1px solid #a0a0a0;border-radius:4px;background:linear-gradient(#c4c4c4,#b6b6b6)"></div>
<div class="tbtn" style="left:36px;top:613px"></div>
<div class="tbtn" style="left:1px;top:648px"></div>
<div class="tbtn" style="left:36px;top:648px"></div>
<div class="tbtn" style="left:1px;top:683px"></div>
<div class="tbtn" style="left:1px;top:726px"></div>
<div class="tbtn" style="left:36px;top:726px"></div>
<div class="tbtn" style="left:1px;top:769px"></div>
<svg class="abs" style="left:0;top:108px;pointer-events:none" width="72" height="690" viewBox="0 108 72 690"><path d="M13.5 172.5 H21.5 M17.5 168.5 V176.5" stroke="#000" stroke-width="1.2" fill="none"/>
<circle cx="42.4" cy="162.5" r="1.75" fill="#ff0000"/>
<circle cx="42.4" cy="169.4" r="1.75" fill="#ff0000"/>
<circle cx="42.4" cy="176.4" r="1.75" fill="#ff0000"/>
<circle cx="42.4" cy="183.4" r="1.75" fill="#ff0000"/>
<circle cx="49.4" cy="162.5" r="1.75" fill="#ff0000"/>
<circle cx="49.4" cy="169.4" r="1.75" fill="#ff0000"/>
<circle cx="49.4" cy="176.4" r="1.75" fill="#ff0000"/>
<circle cx="49.4" cy="183.4" r="1.75" fill="#ff0000"/>
<circle cx="56.4" cy="162.5" r="1.75" fill="#ff0000"/>
<circle cx="56.4" cy="169.4" r="1.75" fill="#ff0000"/>
<circle cx="56.4" cy="176.4" r="1.75" fill="#ff0000"/>
<circle cx="56.4" cy="183.4" r="1.75" fill="#ff0000"/>
<circle cx="63.4" cy="162.5" r="1.75" fill="#ff0000"/>
<circle cx="63.4" cy="169.4" r="1.75" fill="#ff0000"/>
<circle cx="63.4" cy="176.4" r="1.75" fill="#ff0000"/>
<circle cx="63.4" cy="183.4" r="1.75" fill="#ff0000"/>
<path d="M15.9 205.4 C16.5 213 21 217.5 28.4 218 M7.4 215.2 L28.4 226.4" stroke="#1e1e1e" stroke-width="1.08" fill="none" stroke-linecap="round"/><circle cx="15.9" cy="205.4" r="1.7" fill="#ff0000"/><circle cx="7.4" cy="215.2" r="1.7" fill="#ff0000"/><circle cx="28.4" cy="218.0" r="1.7" fill="#ff0000"/><circle cx="28.4" cy="226.4" r="1.7" fill="#ff0000"/>
<path d="M42.5 216.5 L63.8 204.8 M63.5 213.8 C56 214.5 51.5 218.5 50.9 226.4" stroke="#1e1e1e" stroke-width="1.08" fill="none" stroke-linecap="round"/>
<circle cx="42.5" cy="216.5" r="1.7" fill="#ff0000"/>
<circle cx="47.6" cy="213.8" r="1.7" fill="#ff0000"/>
<circle cx="52.8" cy="211.0" r="1.7" fill="#ff0000"/>
<circle cx="58.2" cy="208.0" r="1.7" fill="#ff0000"/>
<circle cx="63.8" cy="204.8" r="1.7" fill="#ff0000"/>
<circle cx="63.5" cy="213.8" r="1.7" fill="#ff0000"/>
<circle cx="58.5" cy="215.0" r="1.7" fill="#ff0000"/>
<circle cx="54.4" cy="217.2" r="1.7" fill="#ff0000"/>
<circle cx="51.8" cy="221.5" r="1.7" fill="#ff0000"/>
<circle cx="50.9" cy="226.4" r="1.7" fill="#ff0000"/>
<path d="M9.7 241.3 L19.5 252.3 C22 250 25 248.8 28.4 248.3 M19.5 252.3 C17.5 255 16.2 258 15.6 260.8" stroke="#1e1e1e" stroke-width="1.08" fill="none" stroke-linecap="round"/><path d="M16.8 248.6 C18 246.6 21.5 246.3 22.6 248.8" stroke="#555" stroke-width="0.7" fill="none"/><circle cx="19.6" cy="248.4" r="0.5" fill="#333"/><circle cx="19.5" cy="252.3" r="1.7" fill="#ff0000"/>
<circle cx="56.8" cy="248" r="6.6" stroke="#1e1e1e" stroke-width="1.08" fill="none" stroke-linecap="round"/><path d="M43 259.4 L50.6 245.2" stroke="#1e1e1e" stroke-width="1.08" fill="none" stroke-linecap="round"/><circle cx="50.6" cy="245.2" r="1.7" fill="#ff0000"/>
<path d="M6.5 286.6 L28.8 275.8 M15.4 296.6 C15.6 289 21 283.8 28.8 283.5" stroke="#1e1e1e" stroke-width="1.08" fill="none" stroke-linecap="round"/><circle cx="17.4" cy="280.9" r="1.7" fill="#ff0000"/><circle cx="27.9" cy="296.1" r="1.7" fill="#ff0000"/>
<circle cx="53" cy="286" r="9.8" stroke="#1e1e1e" stroke-width="1.08" fill="none" stroke-linecap="round"/><circle cx="53.0" cy="276.2" r="1.7" fill="#ff0000"/><circle cx="43.2" cy="286.0" r="1.7" fill="#ff0000"/><circle cx="62.8" cy="286.0" r="1.7" fill="#ff0000"/><circle cx="53.0" cy="295.8" r="1.7" fill="#ff0000"/><circle cx="53.0" cy="286.0" r="1.7" fill="#ff0000"/>
<path d="M6.9 330 L29 318.4 M15.4 339.7 C15.6 332 21 327 28.8 326.6" stroke="#1e1e1e" stroke-width="1.08" fill="none" stroke-linecap="round"/><circle cx="18.0" cy="324.0" r="1.7" fill="#ff0000"/><circle cx="19.3" cy="330.5" r="1.7" fill="#ff0000"/>
<rect x="41.3" y="319.7" width="23.4" height="18.5" fill="none" stroke="#333" stroke-width="1.4"/><path d="M42.5 337 L63.5 321" stroke="#888" stroke-width="0.7" stroke-dasharray="2 1.5" fill="none"/><circle cx="53.0" cy="328.9" r="1.7" fill="#ff0000"/>
<path d="M8 372.4 L29.3 361.6 M16.5 382 C16.8 375 21.5 370 29 369.7" stroke="#1e1e1e" stroke-width="1.08" fill="none" stroke-linecap="round"/><path d="M6 367.8 L10.5 366 " stroke="#000" stroke-width="1.4"/><path d="M12.6 365.2 L9.2 364.6 L10.6 368Z" fill="#000"/><path d="M20.6 383 L21.8 379" stroke="#000" stroke-width="1.4"/><path d="M22.4 376.6 L20 379 L23.6 380Z" fill="#000"/><circle cx="15.1" cy="369.0" r="1.7" fill="#ff0000"/><circle cx="18.8" cy="374.0" r="1.7" fill="#ff0000"/>
<path d="M42.4 371.7 L63.9 361.3" stroke="#000" stroke-width="1.1" stroke-dasharray="2.4 1.8" fill="none"/><circle cx="63.9" cy="361.3" r="1.3" fill="#000"/><circle cx="42" cy="373.5" r="1.2" fill="#000"/><path d="M41.4 368.4 L44.4 367.2" stroke="#000" stroke-width="1.4"/><path d="M46.6 366.2 L43.2 365.6 L44.6 369Z" fill="#000"/><path d="M41.6 371 l2.4 -1" stroke="#000" stroke-width="1.2"/><text x="40" y="384.6" font-family="Liberation Sans, sans-serif" font-size="10" fill="#000">1</text><text x="60.6" y="374.6" font-family="Liberation Sans, sans-serif" font-size="10" fill="#000">2</text><circle cx="49.8" cy="368.7" r="1.7" fill="#ff0000"/>
<path d="M5.9 412.5 L30 419.7 M24.3 402.8 L18.5 427.1" stroke="#1e1e1e" stroke-width="1.08" fill="none" stroke-linecap="round"/><circle cx="21.0" cy="417.1" r="1.7" fill="#ff0000"/>
<path d="M43.1 416.3 L53.5 419.7 M62.4 407 L60 416.6" stroke="#1e1e1e" stroke-width="1.08" fill="none" stroke-linecap="round"/><circle cx="58.5" cy="421.6" r="1.7" fill="#ff0000"/>
<path d="M14.9 489.8 V504.7 H30.8" stroke="#555" stroke-width="1.3" fill="none"/><text x="6.4" y="496" font-family="Liberation Sans, sans-serif" font-size="12" fill="#111">y</text><text x="24" y="513" font-family="Liberation Sans, sans-serif" font-size="12" fill="#111">x</text><circle cx="27.9" cy="490.9" r="1.7" fill="#ff0000"/>
<path d="M40.8 510.1 L57.8 493.6 C62 498 64.4 503.5 64.7 510.1Z" stroke="#333" stroke-width="1.3" fill="none" stroke-linejoin="round"/><text x="44" y="500" font-family="Liberation Sans, sans-serif" font-size="11.5" fill="#111">r</text><text x="54.6" y="506.9" font-family="Liberation Sans, sans-serif" font-size="11" fill="#111">α</text><circle cx="57.8" cy="493.6" r="1.7" fill="#ff0000"/>
<path d="M9.7 552 V535.7 H26" stroke="#c8c8c8" stroke-width="1" fill="none"/><circle cx="26" cy="535.7" r="1.3" fill="#000"/><circle cx="9.7" cy="552" r="1.3" fill="#000"/><text x="23.4" y="546.6" font-family="Liberation Sans, sans-serif" font-size="10" fill="#000">2</text><text x="13" y="554.8" font-family="Liberation Sans, sans-serif" font-size="10" fill="#000">1</text><circle cx="9.7" cy="535.7" r="2.3" fill="#ff0000"/>
<path d="M44.7 552 H60.9 V535.7" stroke="#c8c8c8" stroke-width="1" fill="none"/><circle cx="60.9" cy="535.7" r="1.3" fill="#000"/><circle cx="44.7" cy="552" r="1.3" fill="#000"/><text x="53.2" y="540.9" font-family="Liberation Sans, sans-serif" font-size="10" fill="#000">2</text><text x="42" y="548.6" font-family="Liberation Sans, sans-serif" font-size="10" fill="#000">1</text><circle cx="60.9" cy="552.0" r="2.3" fill="#ff0000"/>
<g stroke="#f4b4b4" stroke-width="0.8" fill="none"><path d="M9.5 577.5 H27 Q29.3 577.5 29.3 580 V596.6 H14.5 V591.5 H9.8 Q6.9 591.5 6.9 588.5 V580 Q6.9 577.5 9.5 577.5Z"/><circle cx="13.9" cy="584" r="3.6"/><path d="M17.7 591.6 H24.6 V584.6Z"/></g><circle cx="17.7" cy="587.0" r="1.8" fill="#ff0000"/>
<path d="M14.7 630.2 H21.7 M18.2 626.7 V633.7" stroke="#333" stroke-width="1.1" fill="none"/>
<path d="M40.8 629.6 H64.4 M52.5 617.8 V641.4" stroke="#000" stroke-width="1.2" fill="none"/><g stroke="#ff0000" stroke-width="1" fill="none"><circle cx="52.5" cy="629.6" r="3.3"/><path d="M49.2 629.6 H55.8 M52.5 626.3000000000001 V632.9"/></g>
<path d="M5.7 664.2 H29.4" stroke="#000" stroke-width="1.2"/><g stroke="#ff0000" stroke-width="1" fill="none"><circle cx="17.4" cy="664.2" r="3.3"/><path d="M14.099999999999998 664.2 H20.7 M17.4 660.9000000000001 V667.5"/></g>
<path d="M52.5 652.9 V676" stroke="#000" stroke-width="1.2"/><g stroke="#ff0000" stroke-width="1" fill="none"><circle cx="52.5" cy="664.4" r="3.3"/><path d="M49.2 664.4 H55.8 M52.5 661.1 V667.6999999999999"/></g>
<path d="M26.5 708.8 L31.0 708.8 M26.0 704.8 L30.4 703.7 M24.7 700.9 L28.7 698.9 M22.5 697.5 L26.0 694.6 M19.6 694.6 L22.4 691.1 M16.1 692.5 L18.0 688.4 M12.2 691.2 L13.2 686.8" stroke="#aaa" stroke-width="0.9" fill="none"/><path d="M8.5 708.8 L27.5 698.7" stroke="#222" stroke-width="1.3"/><g stroke="#ff0000" stroke-width="1" fill="none"><circle cx="8.5" cy="708.8" r="3.6"/><path d="M4.9 708.8 H12.1 M8.5 705.1999999999999 V712.4"/></g>
<g stroke="#ff0000" stroke-width="1" fill="none"><circle cx="14.8" cy="737.2" r="3.4"/><path d="M11.4 737.2 H18.2 M14.8 733.8000000000001 V740.6"/></g><path d="M16 739.6 V750.4 L18.4 748 L20.4 752.4 L22 751.6 L20 747.4 H23.4Z" fill="#fff" stroke="#555" stroke-width="0.9" stroke-linejoin="round"/>
<ellipse cx="46.4" cy="738.5" rx="2.5" ry="3.5" fill="none" stroke="#000" stroke-width="1.4"/><path d="M49.0 736.8000000000001 H61.599999999999994 V741.9000000000001 H59.8 V739.3000000000001 H58.8 V741.1 H57.2 V738.6 H49.0Z" fill="#000"/><g stroke="#ff0000" stroke-width="1" fill="none"><circle cx="52.5" cy="750.4" r="3.4"/><path d="M49.1 750.4 H55.9 M52.5 747.0 V753.8"/></g>
<ellipse cx="11.4" cy="785.3" rx="2.5" ry="3.5" fill="none" stroke="#000" stroke-width="1.4"/><path d="M14.0 783.6 H26.6 V788.7 H24.8 V786.1 H23.8 V787.9 H22.200000000000003 V785.4 H14.0Z" fill="#000"/></svg>
<!--/LT-->
<div id="tabbar"><svg class="abs" style="left:22px;top:3px" width="16" height="16" viewBox="94 111 16 16"><defs><linearGradient id="gQ" x1="0" y1="0" x2="0.4" y2="1"><stop offset="0" stop-color="#98a6d0"/><stop offset="0.45" stop-color="#3a4f98"/><stop offset="1" stop-color="#1c3480"/></linearGradient></defs><circle cx="102.1" cy="118.7" r="5.6" fill="#f4f4f6" stroke="url(#gQ)" stroke-width="1.8"/><path d="M98.6 118.4 H105 M101.6 115.6 V121.6" stroke="#aaa" stroke-width="0.5"/><path d="M99 120.4 H102" stroke="#e88" stroke-width="0.6"/><path d="M102.4 119 L106.6 123.8" stroke="#f4a010" stroke-width="1.9"/><path d="M102.9 119 L106.3 122.8" stroke="#ffd860" stroke-width="0.7"/><circle cx="107.2" cy="124.4" r="1.15" fill="#e87070"/></svg><span style="position:absolute;left:0;width:1122px;top:4.5px;text-align:center;-webkit-text-stroke:.2px #161616;font-size:11.5px;line-height:14px;color:#161616">Unbenannt 1</span></div>
<div id="hruler"></div><div class="abs" style="left:72px;top:131px;width:1083px;height:1px;background:#dedede"></div>
<div id="vruler"></div>
<!--CANVAS-->
<svg class="abs" style="left:73px;top:131px" width="1082" height="617" viewBox="0 0 1082 617" shape-rendering="crispEdges">
<defs><radialGradient id="glow" cx="50%" cy="50%" r="50%"><stop offset="0.735" stop-color="#5f7688" stop-opacity="0"/><stop offset="0.795" stop-color="#5f7688" stop-opacity="0.26"/><stop offset="0.835" stop-color="#5f7688" stop-opacity="0.48"/><stop offset="0.886" stop-color="#5f7688" stop-opacity="0.74"/><stop offset="0.94" stop-color="#637a8d" stop-opacity="1"/><stop offset="0.975" stop-color="#5f7688" stop-opacity="0.85"/><stop offset="1" stop-color="#5f7688" stop-opacity="0.25"/></radialGradient>
<pattern id="dots" patternUnits="userSpaceOnUse" x="47" y="26" width="50" height="50"><rect x="0" y="0" width="1" height="1" fill="#2e2e2e"/></pattern>
<clipPath id="cv"><rect x="22" y="24" width="1043" height="577"/></clipPath><clipPath id="vr"><rect x="0" y="24" width="22" height="600"/></clipPath></defs>
<rect x="21" y="23" width="1044" height="578" fill="#fff"/><rect x="22" y="24" width="1043" height="577" fill="#000"/>
<g clip-path="url(#cv)">
<rect x="46" y="24" width="2" height="577" fill="#0f0f0f"/>
<rect x="546" y="24" width="2" height="577" fill="#0f0f0f"/>
<rect x="1046" y="24" width="2" height="577" fill="#0f0f0f"/>
<rect x="22" y="75" width="1043" height="2" fill="#0f0f0f"/>
<rect x="22" y="575" width="1043" height="2" fill="#0f0f0f"/>
<g stroke-width="2"><line x1="147" y1="24" x2="147" y2="601" stroke="#1e1600"/><line x1="22" y1="476" x2="1065" y2="476" stroke="#1e1600"/>
<line x1="147" y1="24" x2="147" y2="601" stroke="#4c3600" stroke-dasharray="4 2"/><line x1="22" y1="476" x2="1065" y2="476" stroke="#4c3600" stroke-dasharray="4 2"/></g>
<rect x="22" y="24" width="1043" height="577" fill="url(#dots)"/>
<g stroke="#7d0000" stroke-width="1.4" fill="none" shape-rendering="auto"><line x1="27" y1="576" x2="67" y2="576"/><line x1="47" y1="556" x2="47" y2="596"/><circle cx="47" cy="576" r="4.5"/></g>
<circle cx="147" cy="476" r="39.7" fill="url(#glow)" shape-rendering="auto"/>
<g fill="#bfbfbf" shape-rendering="auto"><rect x="131.2" y="474.05" width="31.6" height="3.9" rx="0.8"/><rect x="145.05" y="460.1" width="3.9" height="31.6" rx="0.8"/></g>
<circle cx="147" cy="476" r="5" fill="none" stroke="#dcaa20" stroke-width="1.1" stroke-dasharray="1.6 1.6" shape-rendering="auto"/><circle cx="147" cy="476" r="1.5" fill="#7a5600" shape-rendering="auto"/>
<text x="154.6" y="494.5" font-family="Liberation Sans, sans-serif" font-size="14.3" fill="#f2b52a" textLength="40.2" lengthAdjust="spacingAndGlyphs">Raster</text>
</g>
<g font-family="Liberation Sans, sans-serif" font-size="9.9" letter-spacing="-0.62" fill="#111" stroke="#111" stroke-width="0.12" text-anchor="middle">
<rect x="47" y="17" width="1" height="7" fill="#666"/><text x="47" y="10.3">0</text>
<rect x="97" y="17" width="1" height="7" fill="#666"/><text x="97" y="10.3">10</text>
<rect x="147" y="17" width="1" height="7" fill="#666"/><text x="147" y="10.3">20</text>
<rect x="197" y="17" width="1" height="7" fill="#666"/><text x="197" y="10.3">30</text>
<rect x="247" y="17" width="1" height="7" fill="#666"/><text x="247" y="10.3">40</text>
<rect x="297" y="17" width="1" height="7" fill="#666"/><text x="297" y="10.3">50</text>
<rect x="347" y="17" width="1" height="7" fill="#666"/><text x="347" y="10.3">60</text>
<rect x="397" y="17" width="1" height="7" fill="#666"/><text x="397" y="10.3">70</text>
<rect x="447" y="17" width="1" height="7" fill="#666"/><text x="447" y="10.3">80</text>
<rect x="497" y="17" width="1" height="7" fill="#666"/><text x="497" y="10.3">90</text>
<rect x="547" y="17" width="1" height="7" fill="#666"/><text x="547" y="10.3">100</text>
<rect x="597" y="17" width="1" height="7" fill="#666"/><text x="597" y="10.3">110</text>
<rect x="647" y="17" width="1" height="7" fill="#666"/><text x="647" y="10.3">120</text>
<rect x="697" y="17" width="1" height="7" fill="#666"/><text x="697" y="10.3">130</text>
<rect x="747" y="17" width="1" height="7" fill="#666"/><text x="747" y="10.3">140</text>
<rect x="797" y="17" width="1" height="7" fill="#666"/><text x="797" y="10.3">150</text>
<rect x="847" y="17" width="1" height="7" fill="#666"/><text x="847" y="10.3">160</text>
<rect x="897" y="17" width="1" height="7" fill="#666"/><text x="897" y="10.3">170</text>
<rect x="947" y="17" width="1" height="7" fill="#666"/><text x="947" y="10.3">180</text>
<rect x="997" y="17" width="1" height="7" fill="#666"/><text x="997" y="10.3">190</text>
<rect x="1047" y="17" width="1" height="7" fill="#666"/><text x="1047" y="10.3">200</text>
<g clip-path="url(#vr)">
<rect x="15" y="576" width="7" height="1" fill="#666"/><text transform="translate(8.0,576) rotate(-90)">0</text>
<rect x="15" y="526" width="7" height="1" fill="#666"/><text transform="translate(8.0,526) rotate(-90)">10</text>
<rect x="15" y="476" width="7" height="1" fill="#666"/><text transform="translate(8.0,476) rotate(-90)">20</text>
<rect x="15" y="426" width="7" height="1" fill="#666"/><text transform="translate(8.0,426) rotate(-90)">30</text>
<rect x="15" y="376" width="7" height="1" fill="#666"/><text transform="translate(8.0,376) rotate(-90)">40</text>
<rect x="15" y="326" width="7" height="1" fill="#666"/><text transform="translate(8.0,326) rotate(-90)">50</text>
<rect x="15" y="276" width="7" height="1" fill="#666"/><text transform="translate(8.0,276) rotate(-90)">60</text>
<rect x="15" y="226" width="7" height="1" fill="#666"/><text transform="translate(8.0,226) rotate(-90)">70</text>
<rect x="15" y="176" width="7" height="1" fill="#666"/><text transform="translate(8.0,176) rotate(-90)">80</text>
<rect x="15" y="126" width="7" height="1" fill="#666"/><text transform="translate(8.0,126) rotate(-90)">90</text>
<rect x="15" y="76" width="7" height="1" fill="#666"/><text transform="translate(8.0,76) rotate(-90)">100</text>
<rect x="15" y="26" width="7" height="1" fill="#666"/><text transform="translate(8.0,26) rotate(-90)">110</text>
</g></g>
<path d="M141.5 14 h12 l-6 7z" fill="#000" shape-rendering="auto"/>
<path d="M12 470 v12 l7 -6z" fill="#000" shape-rendering="auto"/>
</svg>
<!--/CANVAS-->
<div id="rpanel"></div>
<div id="rtool"></div>
<div id="hstrip"></div><div id="zoomlbl">10 &lt; 100</div>
<div id="vscroll"></div><div id="vthumb"></div>
<div id="cmd"><span><i>Kommando:</i> line</span></div><div id="cthumb"></div>
<div id="prompt"><span class="lbl">Erster Punkt:</span><div class="inp"></div><div class="btn"><svg class="abs" style="left:5px;top:7px" width="15" height="11" viewBox="0 0 15 11"><rect x="0.5" y="0.5" width="14" height="10" fill="#ececec" stroke="#444"/><rect x="0" y="0" width="15" height="3.5" fill="#000"/><rect x="10" y="1" width="1.5" height="1.2" fill="#888"/></svg></div></div>
<div id="cborder"></div><div id="lborder"></div>
<div id="rtitle">Layerliste</div>
<!--RT-->
<div class="hdl" style="left:1463px;top:116px;width:26px;height:2px;background-image:linear-gradient(90deg,#a8a8a8 2px,transparent 2px);background-size:6px 2px"></div>
<div class="abs" style="left:1456px;top:120px;width:44px;height:42px;border-radius:5px 0 0 5px;background:#b3b3b3"></div>
<div class="abs" style="left:1456px;top:417px;width:44px;height:42px;border-radius:5px 0 0 5px;background:#b3b3b3"></div>
<div class="abs" style="left:1458px;top:261px;width:40px;height:0;border-top:1px dotted #666"></div>
<div class="abs" style="left:1458px;top:409px;width:40px;height:0;border-top:1px dotted #666"></div>
<svg class="abs" style="left:1463px;top:127px" width="28" height="28" viewBox="0 0 28 28"><rect x="0.5" y="0.5" width="27" height="27" fill="#fff" stroke="#2a2a2a"/><rect x="0" y="0" width="28" height="4.6" fill="#000"/><rect x="1" y="1" width="3.4" height="3" fill="#fff"/><g transform="translate(0,0)"><path d="M7.5 13.5 L16 9.5 V19.5 L7.5 23Z" fill="#9a9a9a" stroke="#555" stroke-width="0.7"/><path d="M9.5 13 L18 9 V19 L9.5 22.5Z" fill="#c8c8c8" stroke="#555" stroke-width="0.7"/><path d="M11.5 12.5 L20.5 8.5 V18.5 L11.5 22Z" fill="#fff" stroke="#444" stroke-width="0.7"/><path d="M13.5 19.5 L18.5 11.5 L18 18Z" fill="none" stroke="#e03030" stroke-width="0.9"/></g></svg>
<svg class="abs" style="left:1463px;top:174px" width="28" height="28" viewBox="0 0 28 28"><rect x="0.5" y="0.5" width="27" height="27" fill="#fff" stroke="#2a2a2a"/><rect x="0" y="0" width="28" height="4.6" fill="#000"/><rect x="1" y="1" width="3.4" height="3" fill="#fff"/><rect x="7.5" y="10.5" width="10" height="7.5" fill="#f4ebb8" stroke="#555" stroke-width="0.8"/><circle cx="16" cy="18" r="4.3" fill="#f4ebb8" fill-opacity="0.85" stroke="#555" stroke-width="0.8"/></svg>
<svg class="abs" style="left:1463px;top:220px" width="28" height="28" viewBox="0 0 28 28"><rect x="0.5" y="0.5" width="27" height="27" fill="#fff" stroke="#2a2a2a"/><rect x="0" y="0" width="28" height="4.6" fill="#000"/><rect x="1" y="1" width="3.4" height="3" fill="#fff"/><rect x="5.8" y="10.3" width="16.6" height="11" rx="2.2" fill="#f4f4f4" stroke="#b8c8e4" stroke-width="0.9"/></svg>
<svg class="abs" style="left:1463px;top:276px" width="28" height="28" viewBox="0 0 28 28"><rect x="0.5" y="0.5" width="27" height="27" fill="#fff" stroke="#2a2a2a"/><rect x="0" y="0" width="28" height="4.6" fill="#000"/><rect x="1" y="1" width="3.4" height="3" fill="#fff"/><g fill="#000"><rect x="3" y="7.5" width="4" height="2.6"/><rect x="3" y="13.2" width="4" height="2.6"/><rect x="3" y="19" width="4" height="2.6"/></g><g fill="#fff" stroke="#333" stroke-width="0.7"><rect x="9.5" y="7.4" width="15" height="2.8"/><rect x="9.5" y="13.1" width="15" height="2.8"/><rect x="9.5" y="18.9" width="15" height="2.8"/></g></svg>
<svg class="abs" style="left:1463px;top:322px" width="28" height="28" viewBox="0 0 28 28"><rect x="0.5" y="0.5" width="27" height="27" fill="#fff" stroke="#2a2a2a"/><rect x="0" y="0" width="28" height="4.6" fill="#000"/><rect x="1" y="1" width="3.4" height="3" fill="#fff"/><path d="M6.5 9.5 Q14 12.2 21.5 9.5 L15.8 16 V22.5 L12.6 21.2 V16Z" fill="#8a8a8a" stroke="#555" stroke-width="0.6"/><ellipse cx="14" cy="9.3" rx="7.5" ry="1.7" fill="#5a5a5a" stroke="#444" stroke-width="0.5"/></svg>
<svg class="abs" style="left:1463px;top:368px" width="28" height="28" viewBox="0 0 28 28"><rect x="0.5" y="0.5" width="27" height="27" fill="#fff" stroke="#2a2a2a"/><rect x="0" y="0" width="28" height="4.6" fill="#000"/><rect x="1" y="1" width="3.4" height="3" fill="#fff"/><path d="M3.5 15.5 H24.5" stroke="#f08080" stroke-width="0.7" stroke-dasharray="2 1"/><path d="M6.5 9 L10.5 11.5 V19.5 L6.5 22Z" fill="#fff" stroke="#333" stroke-width="0.8"/><rect x="10.5" y="11.8" width="4.5" height="7.4" fill="#d8d8d8" stroke="#444" stroke-width="0.7"/><rect x="15" y="12.2" width="7" height="6.6" rx="1" fill="#777" stroke="#444" stroke-width="0.6"/><path d="M3.5 15.5 H24.5" stroke="#f08080" stroke-width="0.6" stroke-dasharray="2 1" opacity="0.8"/></svg>
<svg class="abs" style="left:1463px;top:424px" width="28" height="28" viewBox="0 0 28 28"><rect x="0.5" y="0.5" width="27" height="27" fill="#fff" stroke="#2a2a2a"/><rect x="0" y="0" width="28" height="4.6" fill="#000"/><rect x="1" y="1" width="3.4" height="3" fill="#fff"/><g stroke="#666" stroke-width="0.8"><path d="M3 8.5 H13 M3 11.5 H11 M3 14.5 H14 M3 17.5 H14.5"/></g><rect x="0.5" y="21.5" width="27" height="6" fill="#fff" stroke="#2a2a2a"/><path d="M3 24.8 H5 M9 24.8 H24" stroke="#444" stroke-width="1.1"/></svg>
<svg class="abs" style="left:1463px;top:471px" width="28" height="28" viewBox="0 0 28 28"><rect x="0.5" y="0.5" width="27" height="27" fill="#fff" stroke="#2a2a2a"/><rect x="0" y="0" width="28" height="4.6" fill="#000"/><rect x="1" y="1" width="3.4" height="3" fill="#fff"/><rect x="8.2" y="8.8" width="11.6" height="14" rx="0.8" fill="#c8913c" stroke="#8a5e1e" stroke-width="0.7"/><rect x="9.8" y="10.6" width="8.4" height="10.6" fill="#f2f2f2"/><rect x="11.4" y="7.6" width="5.2" height="2.4" rx="0.6" fill="#9a9a9a" stroke="#666" stroke-width="0.4"/><path d="M11 13 H17 M11 15 H17 M11 17 H17 M11 19 H15" stroke="#bbb" stroke-width="0.7"/><path d="M16 21.2 L18.2 19 V21.2Z" fill="#888"/></svg>
<!--/RT-->
<!--RP-->
<svg class="abs" style="left:1157px;top:111px" width="34" height="14" viewBox="0 0 34 14"><circle cx="7" cy="7" r="6.9" fill="#6b6b6b"/><path d="M4.2 4.2 L9.8 9.8 M9.8 4.2 L4.2 9.8" stroke="#fff" stroke-width="1.7" stroke-linecap="round"/><circle cx="25" cy="7" r="6.9" fill="#6b6b6b"/><rect x="23.6" y="4" width="5" height="4" fill="none" stroke="#fff" stroke-width="1"/><rect x="21.4" y="6" width="5" height="4" fill="#6b6b6b" stroke="#fff" stroke-width="1"/></svg>
<div class="lbtn" style="left:1155px"></div>
<div class="lbtn" style="left:1215px"></div>
<div class="lbtn" style="left:1275px"></div>
<div class="lbtn" style="left:1335px"></div>
<div class="lbtn" style="left:1395px"></div>
<div class="abs" style="left:1156px;top:156px;width:298px;height:1px;background:#bcbcbc"></div>
<svg class="abs" style="left:1298px;top:136px" width="14" height="14" viewBox="0 0 14 14"><path d="M5.5 1 h3 v4.5 h4.5 v3 h-4.5 v4.5 h-3 v-4.5 h-4.5 v-3 h4.5z" fill="#ff0000" stroke="#8c0000" stroke-width="0.8"/></svg>
<svg class="abs" style="left:1358px;top:140px" width="14" height="6" viewBox="0 0 14 6"><rect x="1" y="1.2" width="12" height="3.4" fill="#ff0000" stroke="#8c0000" stroke-width="0.8"/></svg>
<svg class="abs" style="left:1417px;top:135.5px" width="16" height="15" viewBox="0 0 16 15"><g transform="translate(1.2,13.8) rotate(-43.5)"><path d="M0 0 L3.2 -1.6 L16 -1.6 L16 1.6 L3.2 1.6Z" fill="#e6a63a" stroke="#8a5a14" stroke-width="0.5"/><path d="M3.2 -0.5 H16" stroke="#f6cf7a" stroke-width="0.8"/><path d="M0 0 L1.6 -0.8 V0.8Z" fill="#3a2a10"/><path d="M1.6 -0.8 L3.2 -1.6 V1.6 L1.6 0.8Z" fill="#e8c89a"/><rect x="16" y="-1.6" width="3.2" height="3.2" rx="0.8" fill="#e03030"/></g></svg>
<div class="abs" style="left:1161px;top:163px;width:16px;height:9px;border:1px solid #000;background:#fff"></div>
<div class="abs" style="left:1183.5px;top:159px;font-size:13px;line-height:16px;color:#000;-webkit-text-stroke:.25px #000">0</div>
<svg class="abs" style="left:1393.5px;top:159.5px" width="16" height="15" viewBox="0 0 16 15"><g transform="translate(1.2,13.8) rotate(-43.5)"><path d="M0 0 L3.2 -1.6 L16 -1.6 L16 1.6 L3.2 1.6Z" fill="#e6a63a" stroke="#8a5a14" stroke-width="0.5"/><path d="M3.2 -0.5 H16" stroke="#f6cf7a" stroke-width="0.8"/><path d="M0 0 L1.6 -0.8 V0.8Z" fill="#3a2a10"/><path d="M1.6 -0.8 L3.2 -1.6 V1.6 L1.6 0.8Z" fill="#e8c89a"/><rect x="16" y="-1.6" width="3.2" height="3.2" rx="0.8" fill="#e03030"/></g></svg>
<svg class="abs" style="left:1439px;top:160px" width="12" height="14" viewBox="0 0 12 14"><path d="M2.6 7 V4.4 A3.4 3.4 0 0 1 9.4 4.4 V7" fill="none" stroke="#c4c4c4" stroke-width="1.3"/><rect x="1.2" y="6.6" width="9.6" height="7" rx="0.6" fill="#b9b9b9"/></svg>
<svg class="abs" style="left:1177.5px;top:137px" width="15" height="11" viewBox="0 0 15 11"><path d="M0.2 5.4 C1.5 2 4.5 0 7.6 0 C10.8 0 13.6 1.8 15 5 C13.6 8.6 11 11 7.4 11 C4 11 1.4 8.6 0.2 5.4Z" fill="#000"/><path d="M2.7 5.1 Q2.9 4.2 3.7 3.7 L11.5 3.7 Q12.4 4.2 12.6 5.1 Q12 9.2 7.6 9.3 Q3.2 9.2 2.7 5.1Z" fill="#fff"/><circle cx="7.5" cy="5.1" r="2.75" fill="#000"/><circle cx="6.5" cy="4.6" r="0.75" fill="#888"/></svg>
<svg class="abs" style="left:1237.5px;top:137px" width="15" height="11" viewBox="0 0 15 11"><path d="M0.2 5.4 C1.5 2 4.5 0 7.6 0 C10.8 0 13.6 1.8 15 5 C13.6 8.6 11 11 7.4 11 C4 11 1.4 8.6 0.2 5.4Z" fill="#a0a0a0"/><path d="M2.7 5.1 Q2.9 4.2 3.7 3.7 L11.5 3.7 Q12.4 4.2 12.6 5.1 Q12 9.2 7.6 9.3 Q3.2 9.2 2.7 5.1Z" fill="#fff"/><circle cx="7.5" cy="5.1" r="2.75" fill="#a0a0a0"/><circle cx="6.5" cy="4.6" r="0.75" fill="#d0d0d0"/></svg>
<svg class="abs" style="left:1415.5px;top:161.3px" width="15" height="11" viewBox="0 0 15 11"><path d="M0.2 5.4 C1.5 2 4.5 0 7.6 0 C10.8 0 13.6 1.8 15 5 C13.6 8.6 11 11 7.4 11 C4 11 1.4 8.6 0.2 5.4Z" fill="#000"/><path d="M2.7 5.1 Q2.9 4.2 3.7 3.7 L11.5 3.7 Q12.4 4.2 12.6 5.1 Q12 9.2 7.6 9.3 Q3.2 9.2 2.7 5.1Z" fill="#fff"/><circle cx="7.5" cy="5.1" r="2.75" fill="#000"/><circle cx="6.5" cy="4.6" r="0.75" fill="#888"/></svg>
<!--/RP-->

<div id="status">
<span style="left:2px;top:8px;letter-spacing:.1px">20,20</span><span style="left:2px;top:28px;letter-spacing:-.1px">@20,20</span>
<div class="abs" style="left:253px;top:4px;width:1px;height:40px;background:#8a8a8a"></div><div class="abs" style="left:254px;top:4px;width:1px;height:40px;background:#f4f4f4"></div>
<span style="left:256px;top:8px;letter-spacing:.32px">28.2843&lt;45°</span><span style="left:256px;top:28px;letter-spacing:.32px">@28.2843&lt;45°</span>
<i style="left:506px;top:21px"></i>
<span style="left:643px;top:18.5px">Erster Punkt</span>
<svg class="abs" style="left:716px;top:7px" width="21" height="32" viewBox="0 0 21 32"><rect x="1.5" y="1.2" width="17" height="29.6" rx="8.5" fill="#fff" stroke="#555" stroke-width="0.8"/><path d="M1.5 15 Q10 12.6 18.5 15" stroke="#444" stroke-width="1.4" fill="none"/><path d="M10 1.4 V3.6 M10 10.6 V13.6" stroke="#444" stroke-width="1"/><rect x="8.3" y="3.7" width="3.5" height="6.9" rx="1.6" fill="#fff" stroke="#444" stroke-width="0.9"/></svg>
<span style="left:754px;top:18.5px">Abbrechen</span>
<i style="left:940px;top:21px"></i>
<span style="left:949px;top:18.5px;letter-spacing:.14px">Keine Objekte selektiert.</span>
<i style="left:1269px;top:21px"></i>
</div>
</div></body></html>
